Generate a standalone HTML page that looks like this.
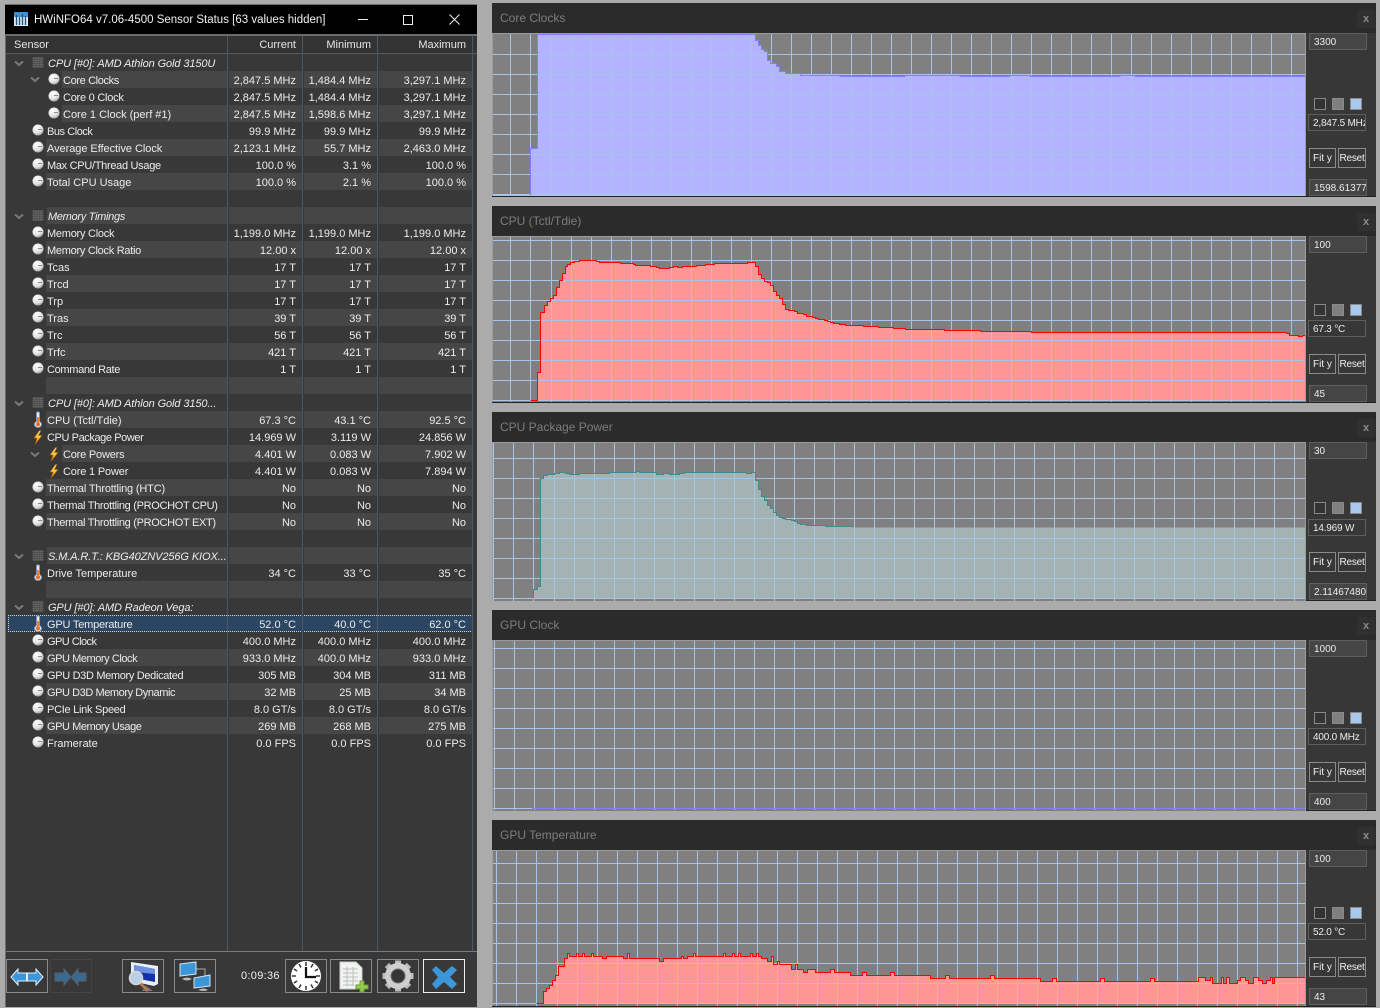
<!DOCTYPE html>
<html><head><meta charset="utf-8"><title>HWiNFO64 Sensor Status</title>
<style>
html,body{margin:0;padding:0;width:1380px;height:1008px;overflow:hidden;background:#ababab;font-family:"Liberation Sans",sans-serif}
div,span,svg{position:absolute;display:block;box-sizing:border-box}
#w{left:5px;top:4px;width:472px;height:1003px;background:#383838;border:1px solid #6c6c6c;border-width:1px 0 0 1px}
#tb{left:5px;top:5px;width:472px;height:29px;background:#000}
#tl{left:34px;top:5px;height:29px;line-height:30px;font-size:11.5px;color:#f2f2f2;white-space:nowrap}
#hl{left:5px;top:34px;width:472px;height:2px;background:#6c6c6c}
#hd{left:6px;top:36px;width:471px;height:18px;background:#333;border-bottom:1px solid #5a5a5a}
.h{top:36px;height:17px;line-height:19px;font-size:11px;color:#e6e6e6;white-space:nowrap}
.sep{top:36px;width:1px;height:915px;background:#4b5767}
.r{left:0;width:0;height:17px}
.r span{top:0;height:17px;line-height:20px;font-size:11px;color:#ececec;white-space:nowrap;overflow:hidden}
.n{left:46px;width:181px;padding-left:1px}
.n2{left:62px;width:165px;padding-left:1px}
.e{left:47px;width:180px;font-style:italic;padding-left:1px}
.a{left:229px;width:73px;text-align:right;padding-right:6px}
.b{left:304px;width:73px;text-align:right;padding-right:6px}
.c{left:379px;width:93px;text-align:right;padding-right:6px}
.l span{background:#464646}
.ic{width:12px;height:12px;overflow:visible}
#ft{left:6px;top:951px;width:471px;height:1px;background:#7a7a7a}
.btn{top:959px;width:42px;height:34px;border:1px solid #8a8a8a}
.p{left:492px;width:884px;background:#373737;border-bottom:1px solid #222}
.pt{left:0;top:0;width:884px;height:30px;background:#2b2b2b;color:#7d7d7d;font-size:12px;line-height:30px;padding-left:8px}
.x{left:865px;top:7px;width:18px;height:18px;background:#303030;color:#8a8a8a;font-size:11px;font-weight:bold;line-height:19px;text-align:center}
.in{left:1309px;width:58px;height:17px;background:#454545;border:1px solid #5e5e5e;color:#ececec;font-size:10px;line-height:17px;padding-left:4px;overflow:hidden;white-space:nowrap}
.vl{left:1308px;width:58px;height:17px;background:#373737;border:1px solid #5e5e5e;color:#ececec;font-size:10px;line-height:17px;padding-left:4px;overflow:hidden;white-space:nowrap;letter-spacing:-.2px}
.s1,.s2,.s3{width:12px;height:12px;border:1px solid #8a8a8a}
.s1{left:1314px;background:#333}
.s2{left:1332px;background:#808080}
.s3{left:1350px;background:#a9c8ee}
.f{height:20px;background:#373737;border:1px solid #8a8a8a;color:#f0f0f0;font-size:10px;line-height:20px;text-align:center;white-space:nowrap}
.fy{left:1309px;width:27px}
.rs{left:1338px;width:28px;letter-spacing:-.2px}
.gr path{fill:none;stroke:#a8c4ea;stroke-dasharray:1 19}
</style></head><body>

<svg width="0" height="0" style="left:0;top:0">
<defs>
<radialGradient id="gg" cx=".4" cy=".3" r=".8"><stop offset="0" stop-color="#fff"/><stop offset=".6" stop-color="#e2e2e2"/><stop offset="1" stop-color="#8c8c8c"/></radialGradient>
<linearGradient id="bo" x1="0" y1="0" x2="0" y2="1"><stop offset="0" stop-color="#fff27a"/><stop offset=".6" stop-color="#f9b81e"/><stop offset="1" stop-color="#e8701a"/></linearGradient>
<symbol id="g" viewBox="0 0 12 12"><circle cx="6" cy="6" r="5.5" fill="url(#gg)"/><path d="M6 5.5H10" stroke="#8a8a8a"/></symbol>
<symbol id="t" viewBox="0 0 12 17"><path d="M4.5 1.5Q6 .3 7.5 1.5V10.5Q10 12 9.5 14Q8.5 16.5 6 16.5Q3.5 16.5 2.5 14Q2 12 4.5 10.5Z" fill="#dfe8f2" stroke="#7d94b8"/><path d="M5.2 6H6.8V11.5Q8.6 12.6 8 14Q7.4 15.3 6 15.3Q4.6 15.3 4 14Q3.4 12.6 5.200 11.500Z" fill="#ef6a1c"/></symbol>
<symbol id="z" viewBox="0 0 10 15"><path d="M6.500 .5L1 8H4L2 14.500L9 5.500H5.500L8 .5Z" fill="url(#bo)" stroke="#a85a10" stroke-width=".6"/></symbol>
<symbol id="c" viewBox="0 0 12 13"><rect x="1" y="1" width="10" height="11" fill="#525252"/><path d="M.5 2.500H11.500M.5 4.500H11.500M.5 6.500H11.500M.5 8.500H11.500M.5 10.500H11.500" stroke="#666" stroke-dasharray="1.500 1"/></symbol>
<symbol id="v" viewBox="0 0 10 7"><path d="M1 1.500L5 5L9 1.500" fill="none" stroke="#7a7a7a" stroke-width="2"/></symbol>
</defs></svg>

<!-- Sensor window -->
<div id="w"></div>
<div id="tb"></div>
<svg style="left:14px;top:12px" width="14" height="14" viewBox="0 0 14 14"><rect width="14" height="6" rx="1" fill="#3f8fd6"/><rect y="5" width="14" height="9" fill="#e8eef4"/><path d="M2.500 3V13M5.500 5V13M8.500 2V13M11.500 4V13" stroke="#24547e" stroke-width="1.400"/></svg>
<div id="tl">HWiNFO64 v7.06-4500 Sensor Status [63 values hidden]</div>
<svg style="left:350px;top:8px" width="120" height="24" viewBox="0 0 120 24"><path d="M8 11.500H18" stroke="#eee"/><path d="M53.500 7.500H62.500V16.500H53.500Z" fill="none" stroke="#eee"/><path d="M99.500 6.500L109.500 16.500M109.500 6.500L99.500 16.500" stroke="#eee" fill="none"/></svg>
<div id="hl"></div>
<div id="hd"></div>
<div class="h" style="left:14px">Sensor</div>
<div class="h" style="left:229px;width:67px;text-align:right">Current</div>
<div class="h" style="left:304px;width:67px;text-align:right">Minimum</div>
<div class="h" style="left:379px;width:87px;text-align:right">Maximum</div>

<div class="r" style="top:54px"><span class="e" style="letter-spacing:-.1px">CPU [#0]: AMD Athlon Gold 3150U</span></div>
<div class="r l" style="top:71px"><span class="n2" style="letter-spacing:-.36px">Core Clocks</span><span class="a">2,847.5 MHz</span><span class="b">1,484.4 MHz</span><span class="c">3,297.1 MHz</span></div>
<div class="r" style="top:88px"><span class="n2" style="letter-spacing:-.25px">Core 0 Clock</span><span class="a">2,847.5 MHz</span><span class="b">1,484.4 MHz</span><span class="c">3,297.1 MHz</span></div>
<div class="r l" style="top:105px"><span class="n2">Core 1 Clock (perf #1)</span><span class="a">2,847.5 MHz</span><span class="b">1,598.6 MHz</span><span class="c">3,297.1 MHz</span></div>
<div class="r" style="top:122px"><span class="n" style="letter-spacing:-.45px">Bus Clock</span><span class="a">99.9 MHz</span><span class="b">99.9 MHz</span><span class="c">99.9 MHz</span></div>
<div class="r l" style="top:139px"><span class="n" style="letter-spacing:-.05px">Average Effective Clock</span><span class="a">2,123.1 MHz</span><span class="b">55.7 MHz</span><span class="c">2,463.0 MHz</span></div>
<div class="r" style="top:156px"><span class="n" style="letter-spacing:-.3px">Max CPU/Thread Usage</span><span class="a">100.0 %</span><span class="b">3.1 %</span><span class="c">100.0 %</span></div>
<div class="r l" style="top:173px"><span class="n">Total CPU Usage</span><span class="a">100.0 %</span><span class="b">2.1 %</span><span class="c">100.0 %</span></div>
<div class="r" style="top:190px"></div>
<div class="r l" style="top:207px"><span class="e" style="letter-spacing:-.3px">Memory Timings</span><span class="a"></span><span class="b"></span><span class="c"></span></div>
<div class="r" style="top:224px"><span class="n" style="letter-spacing:-.25px">Memory Clock</span><span class="a">1,199.0 MHz</span><span class="b">1,199.0 MHz</span><span class="c">1,199.0 MHz</span></div>
<div class="r l" style="top:241px"><span class="n" style="letter-spacing:-.28px">Memory Clock Ratio</span><span class="a">12.00 x</span><span class="b">12.00 x</span><span class="c">12.00 x</span></div>
<div class="r" style="top:258px"><span class="n">Tcas</span><span class="a">17 T</span><span class="b">17 T</span><span class="c">17 T</span></div>
<div class="r l" style="top:275px"><span class="n">Trcd</span><span class="a">17 T</span><span class="b">17 T</span><span class="c">17 T</span></div>
<div class="r" style="top:292px"><span class="n">Trp</span><span class="a">17 T</span><span class="b">17 T</span><span class="c">17 T</span></div>
<div class="r l" style="top:309px"><span class="n">Tras</span><span class="a">39 T</span><span class="b">39 T</span><span class="c">39 T</span></div>
<div class="r" style="top:326px"><span class="n">Trc</span><span class="a">56 T</span><span class="b">56 T</span><span class="c">56 T</span></div>
<div class="r l" style="top:343px"><span class="n">Trfc</span><span class="a">421 T</span><span class="b">421 T</span><span class="c">421 T</span></div>
<div class="r" style="top:360px"><span class="n" style="letter-spacing:-.33px">Command Rate</span><span class="a">1 T</span><span class="b">1 T</span><span class="c">1 T</span></div>
<div class="r l" style="top:377px"><span class="n"></span><span class="a"></span><span class="b"></span><span class="c"></span></div>
<div class="r" style="top:394px"><span class="e" style="letter-spacing:-.1px">CPU [#0]: AMD Athlon Gold 3150...</span></div>
<div class="r l" style="top:411px"><span class="n">CPU (Tctl/Tdie)</span><span class="a">67.3 °C</span><span class="b">43.1 °C</span><span class="c">92.5 °C</span></div>
<div class="r" style="top:428px"><span class="n" style="letter-spacing:-.41px">CPU Package Power</span><span class="a">14.969 W</span><span class="b">3.119 W</span><span class="c">24.856 W</span></div>
<div class="r l" style="top:445px"><span class="n2" style="letter-spacing:-.2px">Core Powers</span><span class="a">4.401 W</span><span class="b">0.083 W</span><span class="c">7.902 W</span></div>
<div class="r" style="top:462px"><span class="n2" style="letter-spacing:-.17px">Core 1 Power</span><span class="a">4.401 W</span><span class="b">0.083 W</span><span class="c">7.894 W</span></div>
<div class="r l" style="top:479px"><span class="n" style="letter-spacing:-.17px">Thermal Throttling (HTC)</span><span class="a">No</span><span class="b">No</span><span class="c">No</span></div>
<div class="r" style="top:496px"><span class="n" style="letter-spacing:-.31px">Thermal Throttling (PROCHOT CPU)</span><span class="a">No</span><span class="b">No</span><span class="c">No</span></div>
<div class="r l" style="top:513px"><span class="n" style="letter-spacing:-.31px">Thermal Throttling (PROCHOT EXT)</span><span class="a">No</span><span class="b">No</span><span class="c">No</span></div>
<div class="r" style="top:530px"></div>
<div class="r l" style="top:547px"><span class="e" style="letter-spacing:-.1px">S.M.A.R.T.: KBG40ZNV256G KIOX...</span><span class="a"></span><span class="b"></span><span class="c"></span></div>
<div class="r" style="top:564px"><span class="n">Drive Temperature</span><span class="a">34 °C</span><span class="b">33 °C</span><span class="c">35 °C</span></div>
<div class="r l" style="top:581px"><span class="n"></span><span class="a"></span><span class="b"></span><span class="c"></span></div>
<div class="r" style="top:598px"><span class="e" style="letter-spacing:-.12px">GPU [#0]: AMD Radeon Vega:</span></div>
<div style="left:8px;top:615px;width:465px;height:17px;background:#2c4560;border:1px dotted #c8d4e0"></div>
<div class="r" style="top:615px"><span class="n" style="letter-spacing:-.2px">GPU Temperature</span><span class="a">52.0 °C</span><span class="b">40.0 °C</span><span class="c">62.0 °C</span></div>
<div class="r" style="top:632px"><span class="n" style="letter-spacing:-.55px">GPU Clock</span><span class="a">400.0 MHz</span><span class="b">400.0 MHz</span><span class="c">400.0 MHz</span></div>
<div class="r l" style="top:649px"><span class="n" style="letter-spacing:-.44px">GPU Memory Clock</span><span class="a">933.0 MHz</span><span class="b">400.0 MHz</span><span class="c">933.0 MHz</span></div>
<div class="r" style="top:666px"><span class="n" style="letter-spacing:-.33px">GPU D3D Memory Dedicated</span><span class="a">305 MB</span><span class="b">304 MB</span><span class="c">311 MB</span></div>
<div class="r l" style="top:683px"><span class="n" style="letter-spacing:-.43px">GPU D3D Memory Dynamic</span><span class="a">32 MB</span><span class="b">25 MB</span><span class="c">34 MB</span></div>
<div class="r" style="top:700px"><span class="n" style="letter-spacing:-.27px">PCIe Link Speed</span><span class="a">8.0 GT/s</span><span class="b">8.0 GT/s</span><span class="c">8.0 GT/s</span></div>
<div class="r l" style="top:717px"><span class="n" style="letter-spacing:-.44px">GPU Memory Usage</span><span class="a">269 MB</span><span class="b">268 MB</span><span class="c">275 MB</span></div>
<div class="r" style="top:734px"><span class="n">Framerate</span><span class="a">0.0 FPS</span><span class="b">0.0 FPS</span><span class="c">0.0 FPS</span></div>

<div class="sep" style="left:227px"></div><div class="sep" style="left:302px"></div><div class="sep" style="left:377px"></div><div class="sep" style="left:472px"></div>

<!-- row icons -->
<svg class="ic" style="left:14px;top:60px;width:10px;height:7px"><use href="#v"/></svg>
<svg class="ic" style="left:32px;top:56px;height:13px"><use href="#c"/></svg>
<svg class="ic" style="left:30px;top:76px;width:10px;height:7px"><use href="#v"/></svg>
<svg class="ic" style="left:48px;top:73px"><use href="#g"/></svg>
<svg class="ic" style="left:48px;top:90px"><use href="#g"/></svg>
<svg class="ic" style="left:48px;top:107px"><use href="#g"/></svg>
<svg class="ic" style="left:32px;top:124px"><use href="#g"/></svg>
<svg class="ic" style="left:32px;top:141px"><use href="#g"/></svg>
<svg class="ic" style="left:32px;top:158px"><use href="#g"/></svg>
<svg class="ic" style="left:32px;top:175px"><use href="#g"/></svg>
<svg class="ic" style="left:14px;top:213px;width:10px;height:7px"><use href="#v"/></svg>
<svg class="ic" style="left:32px;top:209px;height:13px"><use href="#c"/></svg>
<svg class="ic" style="left:32px;top:226px"><use href="#g"/></svg>
<svg class="ic" style="left:32px;top:243px"><use href="#g"/></svg>
<svg class="ic" style="left:32px;top:260px"><use href="#g"/></svg>
<svg class="ic" style="left:32px;top:277px"><use href="#g"/></svg>
<svg class="ic" style="left:32px;top:294px"><use href="#g"/></svg>
<svg class="ic" style="left:32px;top:311px"><use href="#g"/></svg>
<svg class="ic" style="left:32px;top:328px"><use href="#g"/></svg>
<svg class="ic" style="left:32px;top:345px"><use href="#g"/></svg>
<svg class="ic" style="left:32px;top:362px"><use href="#g"/></svg>
<svg class="ic" style="left:14px;top:400px;width:10px;height:7px"><use href="#v"/></svg>
<svg class="ic" style="left:32px;top:396px;height:13px"><use href="#c"/></svg>
<svg class="ic" style="left:32px;top:411px;height:17px"><use href="#t"/></svg>
<svg class="ic" style="left:33px;top:430px;width:10px;height:15px"><use href="#z"/></svg>
<svg class="ic" style="left:30px;top:451px;width:10px;height:7px"><use href="#v"/></svg>
<svg class="ic" style="left:49px;top:447px;width:10px;height:15px"><use href="#z"/></svg>
<svg class="ic" style="left:49px;top:464px;width:10px;height:15px"><use href="#z"/></svg>
<svg class="ic" style="left:32px;top:481px"><use href="#g"/></svg>
<svg class="ic" style="left:32px;top:498px"><use href="#g"/></svg>
<svg class="ic" style="left:32px;top:515px"><use href="#g"/></svg>
<svg class="ic" style="left:14px;top:553px;width:10px;height:7px"><use href="#v"/></svg>
<svg class="ic" style="left:32px;top:549px;height:13px"><use href="#c"/></svg>
<svg class="ic" style="left:32px;top:564px;height:17px"><use href="#t"/></svg>
<svg class="ic" style="left:14px;top:604px;width:10px;height:7px"><use href="#v"/></svg>
<svg class="ic" style="left:32px;top:600px;height:13px"><use href="#c"/></svg>
<svg class="ic" style="left:32px;top:615px;height:17px"><use href="#t"/></svg>
<svg class="ic" style="left:32px;top:634px"><use href="#g"/></svg>
<svg class="ic" style="left:32px;top:651px"><use href="#g"/></svg>
<svg class="ic" style="left:32px;top:668px"><use href="#g"/></svg>
<svg class="ic" style="left:32px;top:685px"><use href="#g"/></svg>
<svg class="ic" style="left:32px;top:702px"><use href="#g"/></svg>
<svg class="ic" style="left:32px;top:719px"><use href="#g"/></svg>
<svg class="ic" style="left:32px;top:736px"><use href="#g"/></svg>

<!-- footer -->
<div id="ft"></div>
<div class="btn" style="left:6px"><svg style="left:0;top:0" width="40" height="32" viewBox="1 1 40 32"><path d="M5 18L12 10V14H20.500V22H12V26Z" fill="#3d96d8" stroke="#dff0fb"/><path d="M37 18L30 10V14H21.500V22H30V26Z" fill="#3d96d8" stroke="#dff0fb"/></svg></div>
<div class="btn" style="left:50px;border-color:#444"><svg style="left:0;top:0" width="40" height="32" viewBox="1 1 40 32"><path d="M5 14H14V10L21 18L14 26V22H5Z" fill="#3a6a92" stroke="#555f69"/><path d="M36 14H28V10L21 18L28 26V22H36Z" fill="#3a6a92" stroke="#555f69"/></svg></div>
<div class="btn" style="left:122px"><svg style="left:0;top:0" width="40" height="32" viewBox="1 1 40 32"><path d="M9 3L36 7V25L32 27L9 22Z" fill="#e8eef6"/><path d="M12 6L33 10V23L12 19Z" fill="#1330a8"/><path d="M12 6L33 10V15L12 13Z" fill="#6f8fe0"/><path d="M24 27L31 32H20Z" fill="#777"/><path d="M18 24L26 32" stroke="#b07850" stroke-width="3"/><circle cx="14" cy="19" r="6.500" fill="#b9cfe6" stroke="#d8d8d8" stroke-width="1.500"/></svg></div>
<div class="btn" style="left:174px"><svg style="left:0;top:0" width="40" height="32" viewBox="1 1 40 32"><path d="M22 10H31V17" fill="none" stroke="#aaa"/><path d="M6 5L22 3V15L6 17Z" fill="#3d96d8" stroke="#cfe4f5"/><path d="M20 19L36 16V27L20 29Z" fill="#3d96d8" stroke="#cfe4f5"/><path d="M8 20Q13 17 18 20Q13 23 8 20ZM24 31Q30 28 34 31Q30 33 24 31Z" fill="#bbb"/></svg></div>
<div id="tm" style="left:241px;top:967px;height:16px;line-height:18px;font-size:11px;color:#f0f0f0;white-space:nowrap;letter-spacing:.3px">0:09:36</div>
<div class="btn" style="left:285px"><svg style="left:0;top:0" width="40" height="32" viewBox="1 1 40 32"><circle cx="21" cy="17" r="15" fill="#fff"/><path d="M21 3V7M21 27V31M7 17H11M31 17H35M14 5L16 8.500M28 5L26 8.500M9 10L12 12M33 10L30 12M9 24L12 22M33 24L30 22M14 29L16 25.500M28 29L26 25.500" stroke="#333" stroke-width="1.500"/><path d="M21 8V18H31" fill="none" stroke="#111" stroke-width="2.200"/></svg></div>
<div class="btn" style="left:330px"><svg style="left:0;top:0" width="40" height="32" viewBox="1 1 40 32"><path d="M10 3H26L32 9V30H10Z" fill="#f2f2f2" stroke="#ccc"/><path d="M13 10H28M13 14H28M13 18H28M13 22H28M13 26H24M17 8V27M23 8V27" stroke="#b8c4b8"/><path d="M30 22V26H26V30H30V33H34V30H38V26H34V22Z" fill="#98cc50" stroke="#6a9a30"/></svg></div>
<div class="btn" style="left:377px"><svg style="left:0;top:0" width="40" height="32" viewBox="1 1 40 32"><path d="M21 1.500V32.500M5.500 17H36.500M10 6L32 28M32 6L10 28" stroke="#bcbcbc" stroke-width="6"/><circle cx="21" cy="17" r="10" fill="none" stroke="#cfcfcf" stroke-width="6"/><circle cx="21" cy="17" r="7" fill="#363636" stroke="#6e6e6e"/></svg></div>
<div class="btn" style="left:423px;border-color:#f0f0f0"><svg style="left:0;top:0" width="40" height="32" viewBox="1 1 40 32"><path d="M13 7L21 14L29 7L34 11L27 18L34 25L29 30L21 23L13 30L9 25L15 18L9 11Z" fill="#3d96d8"/></svg></div>

<!-- panels -->
<div class="p" style="top:3px;height:194px"><div class="pt">Core Clocks</div><div class="x">x</div></div>
<div class="p" style="top:206px;height:197px"><div class="pt">CPU (Tctl/Tdie)</div><div class="x">x</div></div>
<div class="p" style="top:412px;height:189px"><div class="pt">CPU Package Power</div><div class="x">x</div></div>
<div class="p" style="top:610px;height:201px"><div class="pt">GPU Clock</div><div class="x">x</div></div>
<div class="p" style="top:820px;height:187px"><div class="pt">GPU Temperature</div><div class="x">x</div></div>

<svg style="left:0;top:0" width="1380" height="1008" viewBox="0 0 1380 1008" shape-rendering="crispEdges">
<!-- P1 -->
<rect x="492" y="33" width="814" height="163" fill="#808080"/>
<path d="M530.500 195.500V148.500H537.500V34.500H755.500V40.500H758.500V45.500H761.500V49.500H764.500V51.500H767.500V60.500H770.500V63.500H776.500V66.500H779.500V71.500H785.500V73.500H800.500V75.500H840V76.500H905V75.500H960V76.500H1010V75.500H1030V76.500H1120V75.500H1135V76.500H1305V195.500Z" fill="#b3b3ff"/>
<g class="gr"><path d="M551 115H1306" stroke-width="162"/><path d="M899 54V195" stroke-width="814"/></g>
<path d="M510.500 34V196M530.500 34V196M492 195.500H1306" stroke="#a8c4ea" fill="none"/>
<path d="M530.500 195.500V148.500H537.500V34.500H755.500V40.500H758.500V45.500H761.500V49.500H764.500V51.500H767.500V60.500H770.500V63.500H776.500V66.500H779.500V71.500H785.500V73.500H800.500V75.500H840V76.500H905V75.500H960V76.500H1010V75.500H1030V76.500H1120V75.500H1135V76.500H1305" fill="none" stroke="#8080ff"/>
<path d="M492.500 196V33.500H1305.500V196" fill="none" stroke="#9c9c9c"/>
<!-- P2 -->
<rect x="492" y="236" width="814" height="166" fill="#808080"/>
<path d="M530.500 400.500H537.500V372.500H540.500V312.500H544.500V305.500H547.500V301.500H550.500V298.500H553.500V295.500H556.500V287.500H559.500V280.500H562.500V273.500H565.500V266.500H567.500V264.500H570.500V262.500H574.500V261.500H579.500V260.500H596.500V261.500H599.500V262.500H620.500V263.500H633.500V264.500H635.500V265.500H650.500V266.500H656.500V267.500H659.500V268.500H669.500V267.500H673.500V266.500H677.500V267.500H682.500V266.500H696.500V265.500H705.500V264.500H714.500V263.500H747.500V262.500H755.500V266.500H758.500V274.500H761.500V278.500H764.500V281.500H767.500V282.500H770.500V285.500H773.500V291.500H776.500V295.500H779.500V298.500H782.500V304.500H785.500V309.500H788.500V310.500H794.500V311.500H797.500V313.500H803.500V314.500H806.500V316.500H812.500V317.500H815.500V318.500H818.500V319.500H824.500V320.500H827.500V321.500H830.500V322.500H833.500V323.500H839.500V324.500H845.500V325.500H863.500V326.500H878.500V327.500H893.500V328.500H905.500V329.500H944.500V330.500H980.500V331.500H1031.500V332.500H1286.500V333.500H1289.500V335.500H1298.500V336.500H1302.500V335.500H1305V400.500Z" fill="#ff9696"/>
<g class="gr"><path d="M551 319.500H1306" stroke-width="165"/><path d="M899 240V401" stroke-width="814"/></g>
<path d="M510.500 237V402M530.500 237V402" stroke="#a8c4ea" fill="none"/>
<path d="M530.500 400.500H537.500V372.500H540.500V312.500H544.500V305.500H547.500V301.500H550.500V298.500H553.500V295.500H556.500V287.500H559.500V280.500H562.500V273.500H565.500V266.500H567.500V264.500H570.500V262.500H574.500V261.500H579.500V260.500H596.500V261.500H599.500V262.500H620.500V263.500H633.500V264.500H635.500V265.500H650.500V266.500H656.500V267.500H659.500V268.500H669.500V267.500H673.500V266.500H677.500V267.500H682.500V266.500H696.500V265.500H705.500V264.500H714.500V263.500H747.500V262.500H755.500V266.500H758.500V274.500H761.500V278.500H764.500V281.500H767.500V282.500H770.500V285.500H773.500V291.500H776.500V295.500H779.500V298.500H782.500V304.500H785.500V309.500H788.500V310.500H794.500V311.500H797.500V313.500H803.500V314.500H806.500V316.500H812.500V317.500H815.500V318.500H818.500V319.500H824.500V320.500H827.500V321.500H830.500V322.500H833.500V323.500H839.500V324.500H845.500V325.500H863.500V326.500H878.500V327.500H893.500V328.500H905.500V329.500H944.500V330.500H980.500V331.500H1031.500V332.500H1286.500V333.500H1289.500V335.500H1298.500V336.500H1302.500V335.500H1305" fill="none" stroke="#ff0000"/>
<path d="M492.500 402V236.500H1305.500V402" fill="none" stroke="#9c9c9c"/>
<!-- P3 -->
<rect x="492" y="442" width="814" height="159" fill="#808080"/>
<path d="M533.500 598.500V589.500H537.500V586.500H540.500V478.500H543.500V475.500H547.500V474.500H554.500V473.500H559.500V472.500H565.500V473.500H569.500V474.500H579.500V473.500H609.500V472.500H636.500V471.500H639.500V472.500H656.500V474.500H663.500V473.500H669.500V474.500H679.500V473.500H684.500V472.500H746.500V473.500H751.500V472.500H755.500V480.500H758.500V489.500H761.500V496.500H764.500V500.500H767.500V505.500H770.500V508.500H773.500V512.500H776.500V515.500H779.500V517.500H782.500V518.500H785.500V519.500H791.500V520.500H794.500V521.500H797.500V523.500H800.500V524.500H806.500V525.500H825.500V526.500H852.500V527.500H1305V598.500Z" fill="#a3b3b3"/>
<g class="gr"><path d="M554 522H1306" stroke-width="158"/><path d="M899 458V599" stroke-width="814"/></g>
<path d="M493.500 443V601M513.500 443V601M533.500 443V601" stroke="#a8c4ea" fill="none"/>
<path d="M533.500 598.500V589.500H537.500V586.500H540.500V478.500H543.500V475.500H547.500V474.500H554.500V473.500H559.500V472.500H565.500V473.500H569.500V474.500H579.500V473.500H609.500V472.500H636.500V471.500H639.500V472.500H656.500V474.500H663.500V473.500H669.500V474.500H679.500V473.500H684.500V472.500H746.500V473.500H751.500V472.500H755.500V480.500H758.500V489.500H761.500V496.500H764.500V500.500H767.500V505.500H770.500V508.500H773.500V512.500H776.500V515.500H779.500V517.500H782.500V518.500H785.500V519.500H791.500V520.500H794.500V521.500H797.500V523.500H800.500V524.500H806.500V525.500H825.500V526.500H852.500" fill="none" stroke="#3b8c8c"/>
<path d="M492.500 601V442.500H1305.500V601" fill="none" stroke="#9c9c9c"/>
<!-- P4 -->
<rect x="492" y="640" width="814" height="171" fill="#808080"/>
<g class="gr"><path d="M554 725.500H1306" stroke-width="169"/><path d="M899 648V809" stroke-width="814"/></g>
<path d="M494.500 641V810M514.500 641V810M534.500 641V810" stroke="#a8c4ea" fill="none"/>
<path d="M532 808.500H1305" stroke="#8080ff" fill="none"/>
<path d="M492.500 811V640.500H1305.500V811" fill="none" stroke="#9c9c9c"/>
<!-- P5 -->
<rect x="492" y="850" width="814" height="156" fill="#808080"/>
<path d="M536.500 1003.500H543.500V991.500H546.500V988.500H549.500V985.500H552.500V980.500H555.500V975.500H558.500V966.500H564.500V958.500H567.500V953.500H569.500V956.500H576.500V953.500H578.500V956.500H582.500V953.500H584.500V956.500H591.500V953.500H593.500V956.500H602.500V958.500H606.500V956.500H623.500V958.500H627.500V953.500H629.500V958.500H659.500V961.500H663.500V958.500H681.500V956.500H683.500V958.500H687.500V956.500H693.500V953.500H695.500V956.500H723.500V953.500H725.500V956.500H732.500V953.500H734.500V956.500H738.500V953.500H740.500V956.500H750.500V953.500H752.500V956.500H756.500V953.500H758.500V956.500H761.500V958.500H767.500V961.500H771.500V956.500H773.500V964.500H777.500V961.500H779.500V964.500H791.500V969.500H795.500V964.500H797.500V969.500H803.500V972.500H807.500V969.500H815.500V972.500H830.500V969.500H834.500V972.500H850.500V975.500H862.500V972.500H866.500V975.500H890.500V972.500H894.500V975.500H930.500V978.500H945.500V975.500H949.500V978.500H990.500V975.500H994.500V978.500H1040.500V981.500H1052.500V978.500H1056.500V981.500H1100.500V978.500H1104.500V981.500H1150.500V978.500H1154.500V981.500H1198.500V977.500H1205.500V980.500H1210.500V977.500H1212.500V983.500H1221.500V977.500H1223.500V983.500H1226.500V977.500H1229.500V983.500H1237.500V980.500H1240.500V977.500H1245.500V980.500H1248.500V983.500H1253.500V977.500H1258.500V980.500H1262.500V983.500H1266.500V980.500H1270.500V977.500H1272.500V983.500H1274.500V977.500H1305V1003.500Z" fill="#ff9696"/>
<g class="gr"><path d="M557 928.500H1306" stroke-width="155"/><path d="M899 863V1004" stroke-width="814"/></g>
<path d="M496.500 851V1006M516.500 851V1006M536.500 851V1006" stroke="#a8c4ea" fill="none"/>
<path d="M536.500 1003.500H543.500V991.500H546.500V988.500H549.500V985.500H552.500V980.500H555.500V975.500H558.500V966.500H564.500V958.500H567.500V953.500H569.500V956.500H576.500V953.500H578.500V956.500H582.500V953.500H584.500V956.500H591.500V953.500H593.500V956.500H602.500V958.500H606.500V956.500H623.500V958.500H627.500V953.500H629.500V958.500H659.500V961.500H663.500V958.500H681.500V956.500H683.500V958.500H687.500V956.500H693.500V953.500H695.500V956.500H723.500V953.500H725.500V956.500H732.500V953.500H734.500V956.500H738.500V953.500H740.500V956.500H750.500V953.500H752.500V956.500H756.500V953.500H758.500V956.500H761.500V958.500H767.500V961.500H771.500V956.500H773.500V964.500H777.500V961.500H779.500V964.500H791.500V969.500H795.500V964.500H797.500V969.500H803.500V972.500H807.500V969.500H815.500V972.500H830.500V969.500H834.500V972.500H850.500V975.500H862.500V972.500H866.500V975.500H890.500V972.500H894.500V975.500H930.500V978.500H945.500V975.500H949.500V978.500H990.500V975.500H994.500V978.500H1040.500V981.500H1052.500V978.500H1056.500V981.500H1100.500V978.500H1104.500V981.500H1150.500V978.500H1154.500V981.500H1198.500V977.500H1205.500V980.500H1210.500V977.500H1212.500V983.500H1221.500V977.500H1223.500V983.500H1226.500V977.500H1229.500V983.500H1237.500V980.500H1240.500V977.500H1245.500V980.500H1248.500V983.500H1253.500V977.500H1258.500V980.500H1262.500V983.500H1266.500V980.500H1270.500V977.500H1272.500V983.500H1274.500V977.500H1305" fill="none" stroke="#ff0000"/>
<path d="M492.500 1006V850.500H1305.500V1006" fill="none" stroke="#9c9c9c"/>
</svg>

<!-- controls P1 -->
<div class="in" style="top:33px">3300</div><div class="s1" style="top:98px"></div><div class="s2" style="top:98px"></div><div class="s3" style="top:98px"></div>
<div class="vl" style="top:114px">2,847.5 MHz</div><div class="f fy" style="top:148px">Fit y</div><div class="f rs" style="top:148px">Reset</div><div class="in" style="top:179px">1598.61377197</div>
<!-- controls P2 -->
<div class="in" style="top:236px">100</div><div class="s1" style="top:304px"></div><div class="s2" style="top:304px"></div><div class="s3" style="top:304px"></div>
<div class="vl" style="top:320px">67.3 °C</div><div class="f fy" style="top:354px">Fit y</div><div class="f rs" style="top:354px">Reset</div><div class="in" style="top:385px">45</div>
<!-- controls P3 -->
<div class="in" style="top:442px">30</div><div class="s1" style="top:502px"></div><div class="s2" style="top:502px"></div><div class="s3" style="top:502px"></div>
<div class="vl" style="top:519px">14.969 W</div><div class="f fy" style="top:552px">Fit y</div><div class="f rs" style="top:552px">Reset</div><div class="in" style="top:583px">2.11467480469</div>
<!-- controls P4 -->
<div class="in" style="top:640px">1000</div><div class="s1" style="top:712px"></div><div class="s2" style="top:712px"></div><div class="s3" style="top:712px"></div>
<div class="vl" style="top:728px">400.0 MHz</div><div class="f fy" style="top:762px">Fit y</div><div class="f rs" style="top:762px">Reset</div><div class="in" style="top:793px">400</div>
<!-- controls P5 -->
<div class="in" style="top:850px">100</div><div class="s1" style="top:907px"></div><div class="s2" style="top:907px"></div><div class="s3" style="top:907px"></div>
<div class="vl" style="top:923px">52.0 °C</div><div class="f fy" style="top:957px">Fit y</div><div class="f rs" style="top:957px">Reset</div><div class="in" style="top:988px">43</div>
</body></html>
